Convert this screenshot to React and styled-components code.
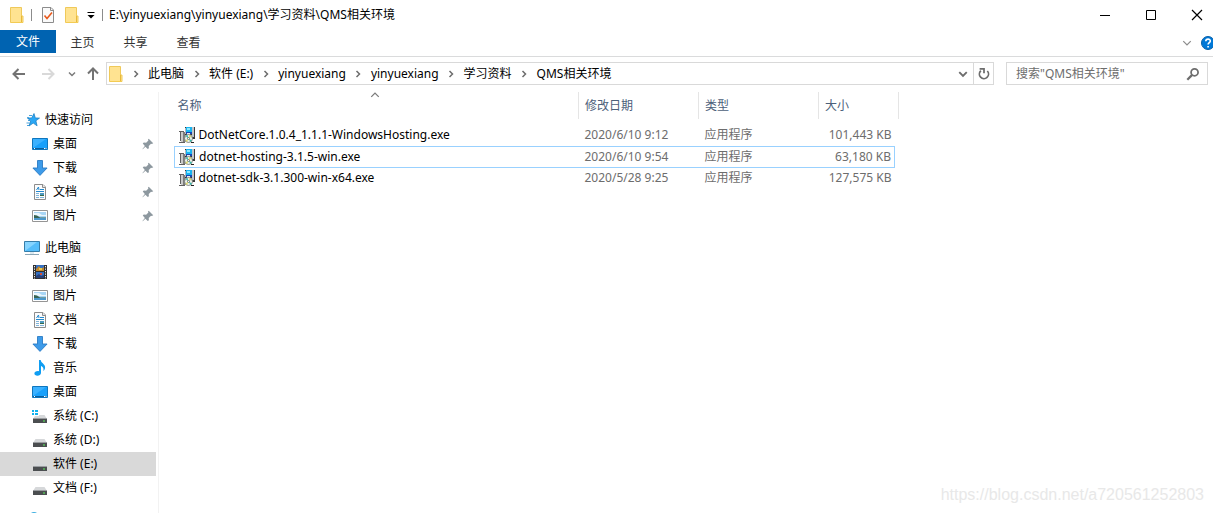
import React from "react";
import styled, { createGlobalStyle } from "styled-components";

const GlobalStyle = createGlobalStyle`
    * {
        box-sizing: border-box;
    }

    body {
        margin: 0;
        background: #fff;
        color: #000;
        font-family: "Noto Sans", "Noto Sans CJK SC", sans-serif;
        font-size: 12px;
        line-height: 16px;
    }

    button, input {
        font: inherit;
        color: inherit;
        background: none;
        border: 0;
        padding: 0;
        margin: 0;
    }

    svg {
        display: block;
        flex: none;
    }
`;

const Window = styled.div`
    position: relative;
    display: flex;
    flex-direction: column;
    height: 100vh;
    overflow: hidden;
`;

const TitleBar = styled.header`
    display: flex;
    align-items: center;
    height: 30px;
    padding-left: 10px;
`;

const QuickTools = styled.div`
    display: flex;
    align-items: center;
    gap: 7px;
    margin-right: 6px;
`;

const Divider = styled.span`
    width: 1px;
    height: 12px;
    background: #8c8c8c;
`;

const IconButton = styled.button`
    display: flex;
    align-items: center;
    justify-content: center;
    width: ${({ $width }) => $width || 16}px;
    height: 20px;
    color: ${({ $color }) => $color || "#000"};
`;

const Path = styled.h1`
    flex: 1;
    margin: 0;
    font-size: 12px;
    font-weight: 400;
    white-space: nowrap;
`;

const WindowControls = styled.div`
    display: flex;
    gap: 14px;
`;

const Ribbon = styled.div`
    display: flex;
    align-items: flex-start;
    height: 27px;
    border-bottom: 1px solid #dadbdc;
`;

const Tab = styled.button`
    width: ${({ $file }) => ($file ? 56 : 53)}px;
    height: ${({ $file }) => ($file ? 23 : 25)}px;
    background: ${({ $file }) => ($file ? "#0063b1" : "none")};
    color: ${({ $file }) => ($file ? "#fff" : "#333")};
`;

const RibbonEnd = styled.div`
    display: flex;
    align-items: center;
    gap: 5px;
    height: 26px;
    margin-left: auto;
    margin-right: -3px;
`;

const NavBar = styled.div`
    display: flex;
    align-items: center;
    padding: 5px 5px 7px 11px;
`;

const NavButtons = styled.div`
    display: flex;
    align-items: center;
    width: 95px;
    gap: 8px;
`;

const NavPair = styled.div`
    display: flex;
    gap: ${({ $gap }) => $gap}px;
`;

const AddressBar = styled.div`
    display: flex;
    align-items: center;
    flex: 1;
    height: 23px;
    padding-left: 2px;
    border: 1px solid #d9d9d9;
`;

const Crumbs = styled.ol`
    display: flex;
    align-items: center;
    flex: 1;
    margin: 0;
    padding: 0;
    list-style: none;
    white-space: nowrap;
`;

const Crumb = styled.li`
    display: flex;
    align-items: center;

    a {
        color: inherit;
        text-decoration: none;
    }
`;

const CrumbArrow = styled.span`
    display: flex;
    justify-content: center;
    width: 25px;
    color: #6d6d6d;
`;

const Refresh = styled.div`
    display: flex;
    align-items: center;
    height: 21px;
    border-left: 1px solid #d9d9d9;
`;

const SearchBox = styled.label`
    display: flex;
    align-items: center;
    width: 202px;
    height: 23px;
    margin-left: 12px;
    padding: 0 7px 0 9px;
    border: 1px solid #d9d9d9;
    color: #6d6d6d;
`;

const SearchInput = styled.input`
    flex: 1;
    min-width: 0;
    outline: none;

    &::placeholder {
        color: #6d6d6d;
        opacity: 1;
    }
`;

const Body = styled.div`
    display: flex;
    flex: 1;
    min-height: 0;
`;

const Sidebar = styled.nav`
    width: 159px;
    padding: 16px 2px 0 0;
    border-right: 1px solid #f2f2f2;
    overflow: hidden;
`;

const Group = styled.ul`
    margin: 0 0 8px;
    padding: 0;
    list-style: none;
`;

const TreeItem = styled.a`
    display: flex;
    align-items: center;
    gap: 5px;
    height: 24px;
    padding-left: ${({ $root }) => ($root ? 24 : 32)}px;
    background: ${({ $active }) => ($active ? "#d9d9d9" : "transparent")};
    color: #000;
    text-decoration: none;
`;

const Pin = styled.span`
    margin-left: auto;
    padding-right: 2px;
`;

const Content = styled.main`
    flex: 1;
    padding-left: 15px;
`;

const FileTable = styled.table`
    width: 725px;
    table-layout: fixed;
    border-collapse: collapse;

    tbody::before {
        content: "";
        display: block;
        height: 6px;
    }
`;

const HeadCell = styled.th`
    position: relative;
    height: 27px;
    padding: 0 0 0 ${({ $first }) => ($first ? 3 : 6)}px;
    border-right: 1px solid #e5e5e5;
    color: #4c607a;
    font-weight: 400;
    text-align: left;
`;

const SortMark = styled.span`
    position: absolute;
    top: -2px;
    left: 50%;
    margin-left: -6px;
    color: #7a7a7a;
`;

const FileRow = styled.tr`
    td {
        height: 21px;
        padding: 0 0 0 6px;
        color: #6d6d6d;
        white-space: nowrap;
    }

    td:not(:last-child) {
        border: solid #99d1ff;
        border-width: ${({ $focused }) => ($focused ? "1px 0" : "0")};
    }

    td:first-child {
        padding-left: 4px;
        border-left-width: ${({ $focused }) => ($focused ? 1 : 0)}px;
    }

    td:nth-child(4) {
        padding-right: 3px;
        border-right-width: ${({ $focused }) => ($focused ? 1 : 0)}px;
        text-align: right;
    }
`;

const FileName = styled.div`
    display: flex;
    align-items: center;
    gap: 4px;
    color: #000;
`;

const Watermark = styled.div`
    position: absolute;
    right: 9px;
    bottom: 8px;
    color: #e8e8e8;
    font-family: "Liberation Sans", sans-serif;
    font-size: 16px;
    line-height: 20px;
`;

const Icon = ({ size = 16, children, ...rest }) => (
    <svg width={size} height={size} viewBox="0 0 16 16" fill="none" aria-hidden="true" {...rest}>
        {children}
    </svg>
);

const FolderIcon = () => (
    <svg width="14" height="16" viewBox="0 0 14 16" fill="none" aria-hidden="true">
        <path d="M.5.5h11v8.5h1.5v6.5H.5z" fill="#ffe391" stroke="#efc95a" />
        <path d="M11.5 9v6" stroke="#e8b93a" />
        <path d="M1 15.5h12" stroke="#f3cb53" />
    </svg>
);

const PropertiesIcon = () => (
    <Icon>
        <path d="M2.5.5h8.5l2.5 2.5v12.5h-11z" fill="#fafafa" stroke="#8c8c8c" />
        <path d="M10.5.5v3h3" stroke="#8c8c8c" />
        <path d="M4.5 8.5l2.5 3 5-6" stroke="#e8591c" strokeWidth="1.6" />
    </Icon>
);

const CustomizeIcon = () => (
    <Icon size={8}>
        <path d="M1 3h14" stroke="currentColor" strokeWidth="2" />
        <path d="M1 8h14l-7 7z" fill="currentColor" />
    </Icon>
);

const Chevron = ({ turn = 0, size = 8, weight = 3 }) => (
    <Icon size={size}>
        <path d="M2 5l6 6 6-6" stroke="currentColor" strokeWidth={weight} transform={`rotate(${turn} 8 8)`} />
    </Icon>
);

const ArrowIcon = ({ turn = 0 }) => (
    <Icon>
        <path d="M14 8H3M7.5 3L2.5 8l5 5" stroke="currentColor" strokeWidth="2" transform={`rotate(${turn} 8 8)`} />
    </Icon>
);

const RefreshIcon = () => (
    <Icon size={14}>
        <path d="M4.4 4.3A5.2 5.2 0 1 0 11.8 4.6" stroke="currentColor" strokeWidth="2" />
        <path d="M3 2.2h5v5" stroke="currentColor" strokeWidth="2" />
    </Icon>
);

const SearchIcon = () => (
    <Icon size={14}>
        <circle cx="9.8" cy="6" r="4" stroke="currentColor" strokeWidth="2" />
        <path d="M7 9l-5.5 5.5" stroke="currentColor" strokeWidth="2.6" />
    </Icon>
);

const StarIcon = () => (
    <Icon>
        <path d="M10 1.5l1.3 4.4 4.2.2-3.6 2.7 1.2 5-3.9-2.7L5 14l1.6-5L3.5 6l4.2-.1z" fill="#2aa7f5" stroke="#1479bd" strokeWidth=".7" />
        <path d="M5 3.5h3M3 5.8h2M4 8.5h2M2.5 11h3M3 13.5h2" stroke="#1b8ad3" strokeWidth=".8" />
    </Icon>
);

const DesktopIcon = () => (
    <Icon>
        <path d="M.5 2.5h15v11H.5z" fill="#18a0fb" stroke="#0f76bd" />
        <path d="M1 12V3h13z" fill="#3bb1ff" />
        <path d="M1 12.5h14" stroke="#0b5e9c" />
        <path d="M2 12.5h1M12 12.5h1M13.5 12.5h1" stroke="#fff" />
    </Icon>
);

const DownloadIcon = () => (
    <Icon>
        <path d="M5.5.5h5v7.5h4.6L8 15.4.9 8h4.6z" fill="#3d9be9" stroke="#2b7cc4" strokeWidth=".9" />
    </Icon>
);

const DocumentIcon = () => (
    <Icon>
        <path d="M2.5.5h8.5l2.5 2.5v12.5h-11z" fill="#fcfcfc" stroke="#8c8c8c" />
        <path d="M10.5.5v3h3" fill="#e6e6e6" stroke="#8c8c8c" />
        <path d="M4.5 6L6.5 3l.5 3M8 5.5h4M4 7.5h8" stroke="#2389cf" />
        <path d="M4 9.5h3M4 11.5h3M4 13.5h3M8 13.5h4" stroke="#7fb4da" />
        <path d="M8 9h4v3H8z" fill="#4d99c0" />
        <path d="M8 11h4v1H8z" fill="#35694b" />
    </Icon>
);

const PictureIcon = () => (
    <Icon>
        <path d="M.5 2.5h15v11H.5z" fill="#fff" stroke="#959595" />
        <path d="M2 4h12v8H2z" fill="#a9d6f5" />
        <path d="M2 5h5l3 2h4v1H2z" fill="#eaf6fd" />
        <path d="M2 7l3 .5 3 2h6v1H2z" fill="#386454" />
        <path d="M2 10h12v2H2z" fill="#4d98cb" />
    </Icon>
);

const ComputerIcon = () => (
    <Icon>
        <path d="M.5 1.5h15v10H.5z" fill="#55bdfa" stroke="#367da9" />
        <path d="M1 11V2h12z" fill="#86d4ff" />
        <path d="M6 12h4v2H6z" fill="#dce9f0" />
        <path d="M1 14.5h14" stroke="#8ba6b6" />
    </Icon>
);

const VideoIcon = () => (
    <Icon>
        <path d="M1 1h14v14H1z" fill="#303030" />
        <path d="M2.5 2v13M13.5 2v13" stroke="#ededed" strokeDasharray="1.3 1.2" />
        <path d="M4 1h8v6H4zM4 8h8v6H4z" fill="#346fc0" />
        <path d="M4 5l3-3 2 3 3-2v4H4z" fill="#c4872b" />
        <path d="M7 4h3v2H7z" fill="#e7c94d" />
        <path d="M4 12l3-2 2 2 3-1v3H4z" fill="#263f78" />
        <path d="M8 9h2v2H8z" fill="#d64d35" />
    </Icon>
);

const MusicIcon = () => (
    <Icon>
        <path d="M7 0h1.7c.2 3 4.6 4 4.4 7.5 0 1.6-1 3-1.9 3.6 1-3-.4-4.3-2.2-5.2V13c0 1.6-1.6 2.8-3.6 2.8-1.8 0-3-.9-3-2.2 0-1.6 1.8-2.8 4.6-2.4z" fill="#0f9df2" />
    </Icon>
);

const DriveIcon = ({ system }) => (
    <Icon>
        <path d="M3.5 7h9L15 11H1z" fill="#d6d8da" />
        <path d="M1 10.5h14V15H1z" fill="#4b4e50" />
        <path d="M1 10.5h14" stroke="#9a9da0" />
        <path d="M11 12.5h2v1h-2z" fill="#5bf25b" />
        {system && (
            <g>
                <path d="M0 1h7v7H0z" fill="#fff" />
                <path d="M0 2h2v2H0zM3 2h3v2H3zM0 5h2v2H0zM3 5h3v2H3z" fill="#0fb2ef" />
            </g>
        )}
    </Icon>
);

const NetworkIcon = () => (
    <Icon>
        <circle cx="10" cy="5" r="5" fill="#3caee0" />
        <path d="M3.5 6.5h12v7h-12z" fill="#6cc8fa" stroke="#367da9" />
    </Icon>
);

const PinIcon = () => (
    <Icon size={12}>
        <path d="M9 1l6 6-2 1-1-.5-3 3 .2 3-1.5 1.3-3.2-3.3L1 15l-.4-.5 3.2-4L1 7.2 2.4 6l3.1.3 3-3L8 2z" fill="#8d989f" />
    </Icon>
);

const InstallerIcon = () => (
    <Icon>
        <path d="M6 0h10v12h-3V8H6z" fill="#3a3a3a" />
        <path d="M13 0h2v10h-2z" fill="#c3c6ca" />
        <path d="M6 1h1v6H6z" fill="#b5b9be" />
        <path d="M7 0h6v5H7z" fill="#18b4f0" />
        <path d="M8 1h3v2H8z" fill="#8ceaff" />
        <path d="M7 5h6v2H7z" fill="#1546b4" />
        <path d="M8 6h3v2H8z" fill="#e8eaee" />
        <path d="M0 4h5v1H0zM1 5h1v9H1zM0 15h6v1H0z" fill="#606060" />
        <path d="M2 5h2v10H2z" fill="#c9c9c9" />
        <path d="M4 5h2v10H4z" fill="#7d7d7d" />
        <circle cx="9.5" cy="11.5" r="4" fill="#e9efe9" stroke="#6b6f6b" strokeWidth=".8" />
        <path d="M9.5 11.5l-3-2.5 2-1zM9.5 11.5l3.5 2-1.5 1.5z" fill="#39b9ae" />
        <path d="M9.5 11.5l1-3.5 2 1.5zM9.5 11.5l-3 2 1.5 1.5z" fill="#e3dc63" />
        <circle cx="9.5" cy="11.5" r="1" fill="#fff" stroke="#555" strokeWidth=".7" />
        <path d="M12 15h3v1h-3z" fill="#222" />
    </Icon>
);

const HelpIcon = () => (
    <Icon>
        <circle cx="8" cy="8" r="6.5" fill="#0078d7" stroke="#0860a8" />
        <path d="M5.8 6.2C5.8 3.4 10.4 3.5 10.3 6c0 1.6-2.2 1.7-2.2 3.6M8.1 11v1.6" stroke="#fff" strokeWidth="1.6" />
    </Icon>
);

const crumbs = ["此电脑", "软件 (E:)", "yinyuexiang", "yinyuexiang", "学习资料", "QMS相关环境"];

const quickAccess = [
    { name: "桌面", icon: <DesktopIcon /> },
    { name: "下载", icon: <DownloadIcon /> },
    { name: "文档", icon: <DocumentIcon /> },
    { name: "图片", icon: <PictureIcon /> },
];

const computer = [
    { name: "视频", icon: <VideoIcon /> },
    { name: "图片", icon: <PictureIcon /> },
    { name: "文档", icon: <DocumentIcon /> },
    { name: "下载", icon: <DownloadIcon /> },
    { name: "音乐", icon: <MusicIcon /> },
    { name: "桌面", icon: <DesktopIcon /> },
    { name: "系统 (C:)", icon: <DriveIcon system /> },
    { name: "系统 (D:)", icon: <DriveIcon /> },
    { name: "软件 (E:)", icon: <DriveIcon />, active: true },
    { name: "文档 (F:)", icon: <DriveIcon /> },
];

const files = [
    { name: "DotNetCore.1.0.4_1.1.1-WindowsHosting.exe", date: "2020/6/10 9:12", size: "101,443 KB" },
    { name: "dotnet-hosting-3.1.5-win.exe", date: "2020/6/10 9:54", size: "63,180 KB", focused: true },
    { name: "dotnet-sdk-3.1.300-win-x64.exe", date: "2020/5/28 9:25", size: "127,575 KB" },
];

const TreeGroup = ({ name, label, icon, items = [], pinned }) => (
    <Group>
        <li>
            <TreeItem href="#" aria-label={label} $root>{icon}{name}</TreeItem>
        </li>
        {items.map((item) => (
            <li key={item.name}>
                <TreeItem href="#" $active={item.active}>
                    {item.icon}
                    {item.name}
                    {pinned && <Pin><PinIcon /></Pin>}
                </TreeItem>
            </li>
        ))}
    </Group>
);

const App = () => {
    return (
        <Window>
            <GlobalStyle />
            <TitleBar>
                <QuickTools>
                    <FolderIcon />
                    <Divider />
                    <IconButton aria-label="属性" $width={18}><PropertiesIcon /></IconButton>
                    <IconButton aria-label="新建文件夹"><FolderIcon /></IconButton>
                    <IconButton aria-label="自定义" $width={8}><CustomizeIcon /></IconButton>
                    <Divider />
                </QuickTools>
                <Path>E:\yinyuexiang\yinyuexiang\学习资料\QMS相关环境</Path>
                <WindowControls>
                    <IconButton aria-label="最小化" $width={32}>
                        <Icon><path d="M3 8.5h10" stroke="currentColor" /></Icon>
                    </IconButton>
                    <IconButton aria-label="最大化" $width={32}>
                        <Icon><path d="M3.5 3.5h9v9h-9z" stroke="currentColor" /></Icon>
                    </IconButton>
                    <IconButton aria-label="关闭" $width={32}>
                        <Icon><path d="M3 3l10 10M13 3L3 13" stroke="currentColor" strokeWidth="1.2" /></Icon>
                    </IconButton>
                </WindowControls>
            </TitleBar>
            <Ribbon>
                <Tab $file>文件</Tab>
                <Tab>主页</Tab>
                <Tab>共享</Tab>
                <Tab>查看</Tab>
                <RibbonEnd>
                    <IconButton aria-label="展开功能区" $color="#8c8c8c"><Chevron size={10} weight={2} /></IconButton>
                    <IconButton aria-label="帮助"><HelpIcon /></IconButton>
                </RibbonEnd>
            </Ribbon>
            <NavBar>
                <NavButtons>
                    <NavPair $gap={13}>
                        <IconButton aria-label="后退" $color="#737373"><ArrowIcon /></IconButton>
                        <IconButton aria-label="前进" $color="#d9d9d9"><ArrowIcon turn={180} /></IconButton>
                    </NavPair>
                    <NavPair $gap={5}>
                        <IconButton aria-label="最近位置" $color="#7a7a7a"><Chevron /></IconButton>
                        <IconButton aria-label="上移" $color="#737373"><ArrowIcon turn={90} /></IconButton>
                    </NavPair>
                </NavButtons>
                <AddressBar>
                    <FolderIcon />
                    <Crumbs>
                        {crumbs.map((crumb, index) => (
                            <Crumb key={index}>
                                <CrumbArrow><Chevron turn={-90} /></CrumbArrow>
                                <a href="#">{crumb}</a>
                            </Crumb>
                        ))}
                    </Crumbs>
                    <IconButton aria-label="以前的位置" $width={20} $color="#6d6d6d"><Chevron size={10} /></IconButton>
                    <Refresh>
                        <IconButton aria-label="刷新" $width={19} $color="#6d6d6d"><RefreshIcon /></IconButton>
                    </Refresh>
                </AddressBar>
                <SearchBox>
                    <SearchInput type="text" aria-label="搜索" placeholder={'搜索"QMS相关环境"'} />
                    <SearchIcon />
                </SearchBox>
            </NavBar>
            <Body>
                <Sidebar>
                    <TreeGroup name="快速访问" icon={<StarIcon />} items={quickAccess} pinned />
                    <TreeGroup name="此电脑" icon={<ComputerIcon />} items={computer} />
                    <TreeGroup label="网络" icon={<NetworkIcon />} />
                </Sidebar>
                <Content>
                    <FileTable>
                        <colgroup>
                            <col />
                            <col width="120" />
                            <col width="120" />
                            <col width="76" />
                            <col width="4" />
                        </colgroup>
                        <thead>
                            <tr>
                                <HeadCell $first>
                                    名称
                                    <SortMark><Chevron turn={180} size={10} weight={2} /></SortMark>
                                </HeadCell>
                                <HeadCell>修改日期</HeadCell>
                                <HeadCell>类型</HeadCell>
                                <HeadCell colSpan={2}>大小</HeadCell>
                            </tr>
                        </thead>
                        <tbody>
                            {files.map((file) => (
                                <FileRow key={file.name} $focused={file.focused}>
                                    <td>
                                        <FileName><InstallerIcon />{file.name}</FileName>
                                    </td>
                                    <td>{file.date}</td>
                                    <td>应用程序</td>
                                    <td>{file.size}</td>
                                    <td />
                                </FileRow>
                            ))}
                        </tbody>
                    </FileTable>
                </Content>
            </Body>
            <Watermark>https://blog.csdn.net/a720561252803</Watermark>
        </Window>
    );
};

export default App;
